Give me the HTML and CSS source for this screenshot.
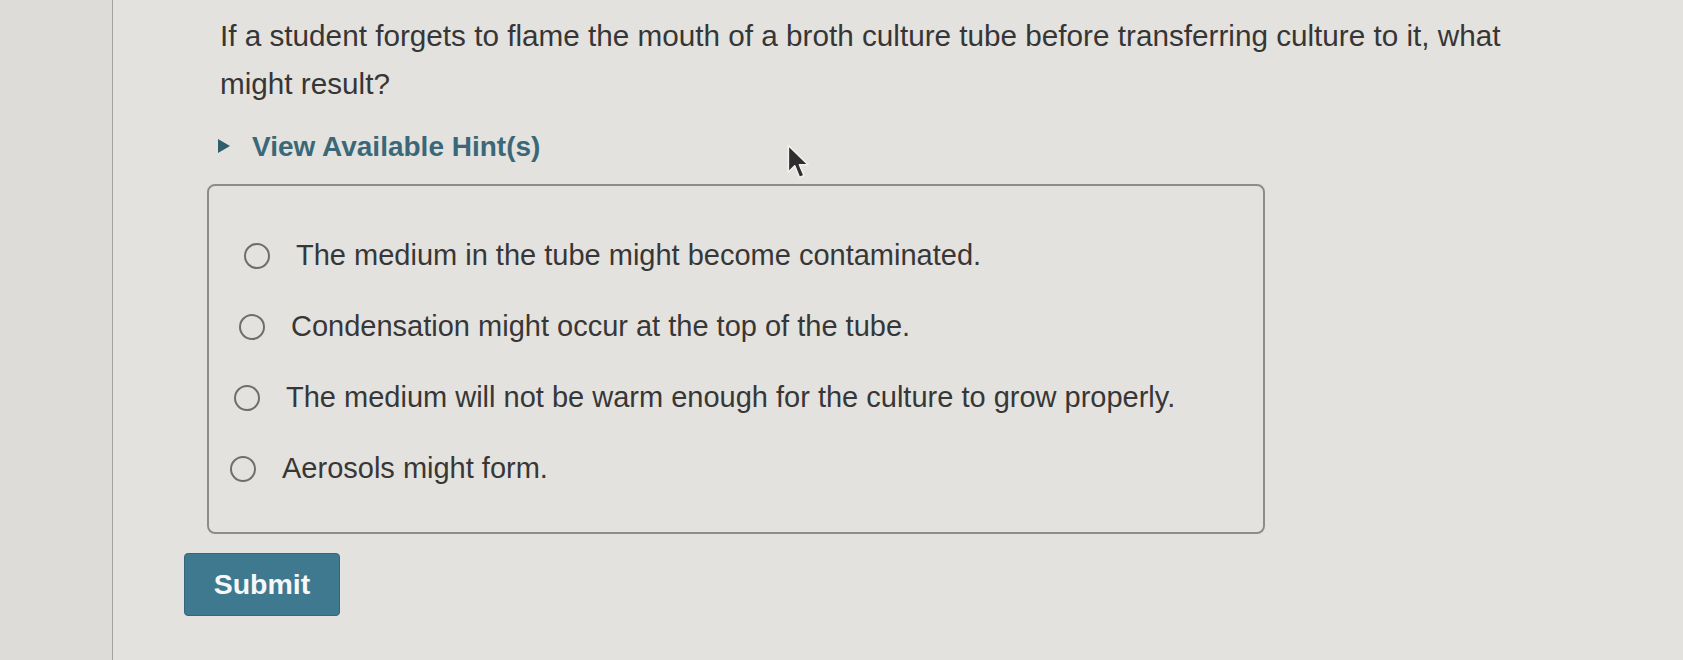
FILE: index.html
```html
<!DOCTYPE html>
<html lang="en">
<head>
<meta charset="utf-8">
<title>Question</title>
<link rel="stylesheet" href="styles.css">
</head>
<body>
<div class="screen">
  <div class="gutter"></div>
  <main class="panel">
    <p class="question">If a student forgets to flame the mouth of a broth culture tube before transferring culture to it, what might result?</p>
    <div class="hint">
      <span class="hint-arrow"></span>
      <span class="hint-label">View Available Hint(s)</span>
    </div>
    <div class="choices">
      <label class="choice c1"><span class="radio"></span><span class="choice-text">The medium in the tube might become contaminated.</span></label>
      <label class="choice c2"><span class="radio"></span><span class="choice-text">Condensation might occur at the top of the tube.</span></label>
      <label class="choice c3"><span class="radio"></span><span class="choice-text">The medium will not be warm enough for the culture to grow properly.</span></label>
      <label class="choice c4"><span class="radio"></span><span class="choice-text">Aerosols might form.</span></label>
    </div>
    <button class="submit" type="button">Submit</button>
    <svg class="cursor" width="28" height="40" viewBox="0 0 24 34" aria-hidden="true">
      <path d="M2 2 L2 25 L7.5 19.5 L11.5 29.5 L15.5 27.8 L11.5 18.5 L19 18.5 Z" fill="#2e2e2e" stroke="#f2f1ee" stroke-width="1.4" stroke-linejoin="round"/>
    </svg>
  </main>
</div>
</body>
</html>
```

FILE: styles.css
```css
html, body {
  margin: 0;
  padding: 0;
}

body {
  background: #e2e0dc;
  font-family: "Liberation Sans", Arial, Helvetica, sans-serif;
  color: #383838;
  width: 1683px;
  height: 660px;
  overflow: hidden;
}

.screen {
  display: flex;
  height: 660px;
}

.gutter {
  width: 112px;
  flex: 0 0 112px;
  background: #dedcd8;
}

.panel {
  position: relative;
  flex: 1;
  border-left: 1px solid #a4a29e;
  background: #e4e2de;
  padding-top: 12px;
}

.question {
  margin: 0 0 0 107px;
  width: 1325px;
  font-size: 29.7px;
  line-height: 48px;
  color: #363636;
}

.hint {
  display: flex;
  align-items: center;
  margin: 15px 0 0 105px;
  height: 48px;
  color: #3a6878;
}

.hint-arrow {
  width: 0;
  height: 0;
  border-top: 7.5px solid transparent;
  border-bottom: 7.5px solid transparent;
  border-left: 12px solid #2f5e6c;
  margin-right: 22px;
  margin-top: -2px;
}

.hint-label {
  font-weight: bold;
  font-size: 28px;
  line-height: 48px;
}

.choices {
  margin: 13px 0 0 94px;
  width: 1058px;
  height: 350px;
  box-sizing: border-box;
  border: 2px solid #8e8c89;
  border-radius: 8px;
  padding: 34px 0 0 0;
}

.choice {
  display: flex;
  align-items: center;
  height: 71px;
}

.c1 { padding-left: 35px; }
.c2 { padding-left: 30px; }
.c3 { padding-left: 25px; }
.c4 { padding-left: 21px; }

.radio {
  width: 22px;
  height: 22px;
  border: 2px solid #6e6e6e;
  border-radius: 50%;
  flex: 0 0 auto;
  margin-right: 26px;
}

.choice-text {
  font-size: 29px;
  line-height: 29px;
  color: #373737;
}

.submit {
  display: block;
  margin: 19px 0 0 71px;
  width: 156px;
  height: 63px;
  background: #3f7990;
  border: 1px solid #34677b;
  border-radius: 4px;
  color: #f7f7f7;
  font-family: "Liberation Sans", Arial, Helvetica, sans-serif;
  font-weight: bold;
  font-size: 28.5px;
  padding: 0;
}

.cursor {
  position: absolute;
  left: 673px;
  top: 143px;
}
```
